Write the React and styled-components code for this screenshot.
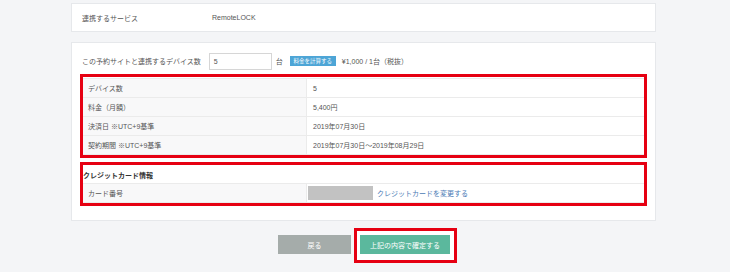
import styled, { createGlobalStyle } from 'styled-components';

const GlobalStyle = createGlobalStyle`
	html, body {
		margin: 0;
		padding: 0;
		background: #f4f5f7;
		font-family: "Liberation Sans", "Noto Sans CJK JP", sans-serif;
		color: #555;
	}
	#root {
		width: 730px;
		height: 272px;
		overflow: hidden;
	}
`;

const Page = styled.div`
	width: 585px;
	margin: 3px 0 0 71px;
	display: flex;
	flex-direction: column;
	gap: 10px;
`;

const Card = styled.div`
	background: #fff;
	border: 1px solid #e6e8eb;
	box-sizing: border-box;
	padding: ${({ pad }) => pad || '0 10px'};
`;

const ServiceRow = styled.div`
	height: 27px;
	display: flex;
	align-items: center;
	font-size: 7px;
`;

const ServiceLabel = styled.span`
	width: 130px;
`;

const DeviceRow = styled.div`
	height: 34px;
	display: flex;
	align-items: center;
	font-size: 7px;
	margin-top: 1px;
`;

const Input = styled.div`
	width: 63px;
	height: 17px;
	box-sizing: border-box;
	border: 1px solid #d6d6d6;
	margin: 0 4px 0 8px;
	display: flex;
	align-items: center;
	padding-left: 4px;
	background: #fff;
	color: #555;
`;

const CalcButton = styled.span`
	background: #4da5d6;
	color: #fff;
	font-size: 5.5px;
	height: 10px;
	width: 46px;
	display: inline-flex;
	align-items: center;
	justify-content: center;
	margin: 0 6px 0 7px;
`;

const Highlight = styled.div`
	position: relative;
	margin: ${({ m }) => m || '0'};

	&::after {
		content: '';
		position: absolute;
		inset: -4px -3px -3px -3px;
		border: 3px solid #e60012;
		pointer-events: none;
	}
`;

const ButtonFrame = styled.div`
	border: 3px solid #e60012;
	background: #fff;
	padding: 4px 4px 6px 3px;
	margin: -7px -7px -9px -6px;
`;

const Table = styled.div`
	border-top: ${({ open }) => (open ? 'none' : '1px solid #ebebeb')};
	display: grid;
	grid-template-columns: 224px 1fr;
	font-size: 7px;
`;

const Cell = styled.div`
	height: 18px;
	display: flex;
	align-items: center;
	padding-left: ${({ head }) => (head ? '5px' : '6px')};
	background: ${({ head }) => (head ? '#f8f8f9' : '#fff')};
	border-bottom: 1px solid #ebebeb;
	border-right: ${({ head }) => (head ? '1px solid #ebebeb' : 'none')};
	color: #555;
`;

const SectionTitle = styled.div`
	height: 17px;
	display: flex;
	align-items: center;
	font-size: 7px;
	font-weight: bold;
	color: #333;
	border-bottom: 1px solid #ebebeb;
`;

const CardMask = styled.span`
	width: 65px;
	height: 14px;
	background: #c2c2c2;
	margin: 0 4px 0 -5px;
`;

const Link = styled.span`
	color: #4b7bb5;
`;

const Buttons = styled.div`
	display: flex;
	justify-content: center;
	align-items: center;
	gap: 9px;
	margin-top: 4px;
	padding-left: 1px;
`;

const Button = styled.div`
	width: ${({ w }) => w}px;
	height: 19px;
	background: ${({ bg }) => bg};
	color: #fff;
	font-size: 7px;
	display: flex;
	align-items: center;
	justify-content: center;
`;

const rows = [
	['デバイス数', '5'],
	['料金（月額）', '5,400円'],
	['決済日 ※UTC+9基準', '2019年07月30日'],
	['契約期間 ※UTC+9基準', '2019年07月30日～2019年08月29日'],
];

const App = () => (
	<>
		<GlobalStyle />
		<Page>
			<Card>
				<ServiceRow>
					<ServiceLabel>連携するサービス</ServiceLabel>
					<span>RemoteLOCK</span>
				</ServiceRow>
			</Card>
			<Card pad="0 11px 17px 11px">
				<DeviceRow>
					<span style={{ marginLeft: -1 }}>この予約サイトと連携するデバイス数</span>
					<Input>5</Input>
					<span>台</span>
					<CalcButton>料金を計算する</CalcButton>
					<span>¥1,000 / 1台（税抜）</span>
				</DeviceRow>
				<Highlight>
					<Table>
						{rows.map(([k, v]) => [
							<Cell head key={k}>{k}</Cell>,
							<Cell key={k + 'v'}>{v}</Cell>,
						])}
					</Table>
				</Highlight>
				<Highlight m="11px 0 0 0">
					<SectionTitle>クレジットカード情報</SectionTitle>
					<Table open>
						<Cell head>カード番号</Cell>
						<Cell>
							<CardMask />
							<Link>クレジットカードを変更する</Link>
						</Cell>
					</Table>
				</Highlight>
			</Card>
			<Buttons>
				<Button w={73} bg="#a5acaa">戻る</Button>
				<ButtonFrame>
					<Button w={90} bg="#5bb89d">上記の内容で確定する</Button>
				</ButtonFrame>
			</Buttons>
		</Page>
	</>
);

export default App;
